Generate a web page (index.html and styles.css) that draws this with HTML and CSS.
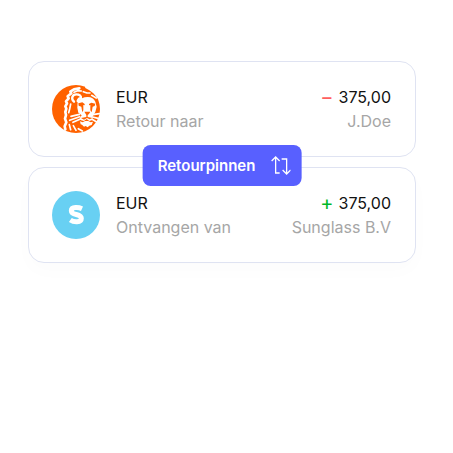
FILE: index.html
```html
<!DOCTYPE html>
<html lang="nl">
<head>
  <meta charset="UTF-8" />
  <meta name="viewport" content="width=device-width, initial-scale=1.0"/>
  <title>Retourpinnen</title>
  <link rel="stylesheet" href="styles.css">
</head>
<body>
  <main class="transfer">
    <section class="card">
      <svg class="avatar" viewBox="0 0 144 144" aria-hidden="true">
        <circle cx="72" cy="72" r="72" fill="#ff6200"/>
        <!-- mane -->
        <path fill="#fff" d="M98 0H144V44L134 36L124 25L112 16L100 9Z"/>
        <g fill="none" stroke="#fff" stroke-width="5" stroke-linecap="round" stroke-linejoin="round">
          <path d="M82 10L66 13L55 20L58 25L47 34L50 40L42 49L45 55L40 64L43 71L40 81L42 90L39 101L43 112L38 124L40 133" stroke-width="8"/>
          <path d="M66 22L77 17L88 18M94 20L105 24L114 24M119 31L133 39M56 57L53 72L50 83M52 119L56 134M64 122L72 136M79 131L91 138"/>
          <!-- ear -->
          <path d="M66 50C56 41 61 28 73 28C82 28 88 33 87 40C82 39 79 43 77 48" stroke-width="7"/>
          <!-- whiskers -->
          <path d="M82 88L57 94M83 95L53 106M87 101L63 112M122 89L142 86M122 96L141 101M119 102L134 111" stroke-width="5"/>
        </g>
        <!-- face -->
        <path fill="#fff" d="M77 49C85 41 94 36 107 36C119 36 126 41 130 50L134 65L130 81L122 94L121 105L112 108L104 102L96 108L87 106L84 98L89 91L79 83L76 68Z"/>
        <path fill="#ff6200" d="M79 55L91 52L98 57V61L94 60V76L91 82L88 65L80 62ZM111 57L118 53L130 56L128 63L122 65L119 82L115 76V60L111 61ZM97 80H115L111 87L107 90V96L121 99L113 103L105 99L96 104L87 99L103 96V90Z"/>
        <path fill="#fff" d="M84 109L92 112L99 108H109L116 112L123 110L119 120L112 122L107 127L101 123L96 125L90 119L86 118Z"/>
      </svg>
      <div class="details">
        <div class="row">
          <span>EUR</span>
          <span class="amount"><span class="sign minus">−</span>375,00</span>
        </div>
        <div class="row muted">
          <span>Retour naar</span>
          <span>J.Doe</span>
        </div>
      </div>
    </section>

    <button type="button" class="transfer-button">
      Retourpinnen
      <svg class="swap" viewBox="0 0 20 20" aria-hidden="true">
        <path d="M1 5L5 1L9 5M5 1V17H9M11 3H16V18M12 14L16 18L20 14" fill="none" stroke="#fff" stroke-width="1.3"/>
      </svg>
    </button>

    <section class="card card-shadow">
      <svg class="avatar" viewBox="0 0 144 144" aria-hidden="true">
        <circle cx="72" cy="72" r="72" fill="#68d0f3"/>
        <path d="M90 53C81 49 58 46 58 59C58 75 88 66 88 82C88 96 65 94 55 87" fill="none" stroke="#fff" stroke-width="15"/>
      </svg>
      <div class="details">
        <div class="row">
          <span>EUR</span>
          <span class="amount"><span class="sign plus">+</span>375,00</span>
        </div>
        <div class="row muted">
          <span>Ontvangen van</span>
          <span>Sunglass B.V</span>
        </div>
      </div>
    </section>
  </main>
</body>
</html>
```

FILE: styles.css
```css
* {
  margin: 0;
  padding: 0;
  box-sizing: border-box;
  font-family: 'Inter', sans-serif;
}

body {
  background-color: #fff;
  padding: 61px 37px 61px 28px;
}

.transfer {
  position: relative;
  display: flex;
  flex-direction: column;
  gap: 10px;
}

.card {
  display: flex;
  align-items: center;
  gap: 16px;
  padding: 23px 24px 23px 23px;
  background-color: #fff;
  border: 1px solid #dfe3f2;
  border-radius: 16px;
}

.card-shadow {
  box-shadow: 0 8px 20px rgba(0, 0, 0, 0.015);
}

.avatar {
  width: 48px;
  height: 48px;
  flex-shrink: 0;
}

.details {
  flex: 1;
}

.row {
  display: flex;
  justify-content: space-between;
  font-size: 16px;
  line-height: 24px;
  color: #111;
}

.muted {
  color: #a6a6a6;
}

.amount {
  display: flex;
  align-items: center;
  gap: 5px;
}

.sign {
  font-size: 20px;
}

.minus {
  color: #ff5f5f;
}

.plus {
  color: #00b828;
}

.transfer-button {
  position: absolute;
  top: 84px;
  left: 50%;
  transform: translateX(-50%);
  display: flex;
  align-items: center;
  gap: 15px;
  padding: 10px 11px 10px 15px;
  height: 41px;
  border: none;
  border-radius: 8px;
  background-color: #5860ff;
  color: #fff;
  font-size: 15px;
  font-weight: 600;
  cursor: pointer;
}

.swap {
  width: 20px;
  height: 20px;
}
```
